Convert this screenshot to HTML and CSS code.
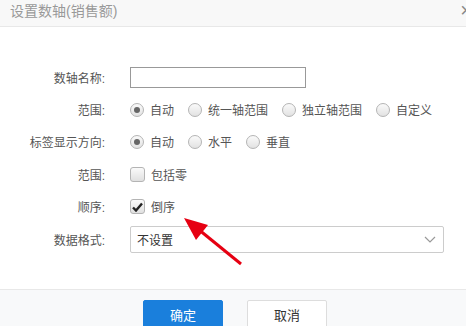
FILE: index.html
```html
<!DOCTYPE html>
<html lang="zh-CN">
<head>
  <meta charset="UTF-8" />
  <title>设置数轴</title>
  <link rel="stylesheet" href="styles.css">
</head>
<body>
  <div class="dialog">
    <!-- Title bar -->
    <div class="dialog-header">
      <span class="dialog-title">设置数轴(销售额)</span>
      <span class="dialog-close">&times;</span>
    </div>

    <!-- Form body -->
    <div class="dialog-body">
      <div class="form-row">
        <label class="form-label">数轴名称:</label>
        <div class="form-field"><input type="text" class="text-input"></div>
      </div>

      <div class="form-row">
        <label class="form-label">范围:</label>
        <div class="form-field">
          <span class="option"><span class="radio checked"></span>自动</span>
          <span class="option"><span class="radio"></span>统一轴范围</span>
          <span class="option"><span class="radio"></span>独立轴范围</span>
          <span class="option"><span class="radio"></span>自定义</span>
        </div>
      </div>

      <div class="form-row">
        <label class="form-label">标签显示方向:</label>
        <div class="form-field">
          <span class="option"><span class="radio checked"></span>自动</span>
          <span class="option"><span class="radio"></span>水平</span>
          <span class="option"><span class="radio"></span>垂直</span>
        </div>
      </div>

      <div class="form-row">
        <label class="form-label">范围:</label>
        <div class="form-field">
          <span class="option"><span class="checkbox"></span>包括零</span>
        </div>
      </div>

      <div class="form-row">
        <label class="form-label">顺序:</label>
        <div class="form-field">
          <span class="option">
            <span class="checkbox">
              <svg width="11" height="10" viewBox="0 0 11 10">
                <path d="M1 5.5 L4 8.5 L10 1.5" fill="none" stroke="#222" stroke-width="2.4"/>
              </svg>
            </span>倒序</span>
        </div>
      </div>

      <div class="form-row">
        <label class="form-label">数据格式:</label>
        <div class="form-field">
          <div class="select">
            <span>不设置</span>
            <svg class="select-arrow" width="12" height="7" viewBox="0 0 12 7">
              <path d="M1 1 L6 6 L11 1" fill="none" stroke="#999" stroke-width="1.2"/>
            </svg>
          </div>
        </div>
      </div>
    </div>

    <!-- Buttons -->
    <div class="dialog-footer">
      <button class="btn btn-primary">确定</button>
      <button class="btn">取消</button>
    </div>

    <!-- Annotation arrow -->
    <svg class="annotation" width="466" height="326" viewBox="0 0 466 326">
      <line x1="241" y1="264" x2="198" y2="229" stroke="#e60012" stroke-width="3"/>
      <polygon points="184,218 208,225 196,240" fill="#e60012"/>
    </svg>
  </div>
</body>
</html>
```

FILE: styles.css
```css
body {
  margin: 0;
  font-family: "Liberation Sans", "Noto Sans CJK SC", sans-serif;
  font-size: 12px;
  color: #555;
  background: #fff;
}

.dialog {
  position: relative;
  width: 466px;
  height: 326px;
  overflow: hidden;
}

.dialog-header {
  height: 26px;
  background: #f8f8f8;
  border-bottom: 1px solid #e8e8e8;
  display: flex;
  align-items: center;
  justify-content: space-between;
  padding-left: 10px;
}

.dialog-title {
  font-size: 14px;
  color: #999;
  line-height: 20px;
  margin-top: -4px;
}

.dialog-close {
  font-size: 20px;
  color: #888;
  margin-right: -6px;
  margin-top: -6px;
}

.dialog-body {
  padding-top: 34px;
  height: 228px;
}

.form-row {
  display: grid;
  grid-template-columns: 105px 1fr;
  column-gap: 25px;
  align-items: center;
  height: 32.4px;
}

.form-label {
  text-align: right;
  color: #555;
}

.form-field {
  display: flex;
  align-items: center;
}

.text-input {
  width: 176px;
  height: 21px;
  box-sizing: border-box;
  border: 1px solid #999;
  padding: 0 4px;
  margin: 0;
}

.option {
  display: inline-flex;
  align-items: center;
  margin-right: 14px;
  color: #555;
}

.radio {
  width: 14px;
  height: 14px;
  box-sizing: border-box;
  border: 1px solid #b4b4b4;
  border-radius: 50%;
  background: linear-gradient(#fafafa, #e2e2e2);
  margin-right: 6px;
  display: flex;
  align-items: center;
  justify-content: center;
}

.radio.checked::after {
  content: "";
  width: 6px;
  height: 6px;
  border-radius: 50%;
  background: #666;
}

.checkbox {
  width: 15px;
  height: 15px;
  box-sizing: border-box;
  border: 1px solid #b4b4b4;
  border-radius: 3px;
  background: linear-gradient(#fafafa, #e0e0e0);
  margin-right: 6px;
  display: flex;
  align-items: center;
  justify-content: center;
}

.select {
  width: 314px;
  height: 27px;
  box-sizing: border-box;
  border: 1px solid #ccc;
  border-radius: 2px;
  display: flex;
  align-items: center;
  justify-content: space-between;
  padding: 0 7px 0 6px;
  font-size: 12px;
  color: #333;
}

.dialog-footer {
  border-top: 1px solid #e8e8e8;
  background: #f8f9fa;
  height: 40px;
  padding: 10px 0 0 4px;
  display: flex;
  justify-content: center;
  gap: 24px;
}

.btn {
  width: 80px;
  height: 28px;
  border: 1px solid #ddd;
  border-radius: 2px;
  background: #fff;
  color: #333;
  font-family: inherit;
  font-size: 13px;
  padding: 0;
}

.btn-primary {
  background: #1a7fdc;
  border-color: #1a7fdc;
  color: #fff;
}

.annotation {
  position: absolute;
  left: 0;
  top: 0;
  pointer-events: none;
}
```
